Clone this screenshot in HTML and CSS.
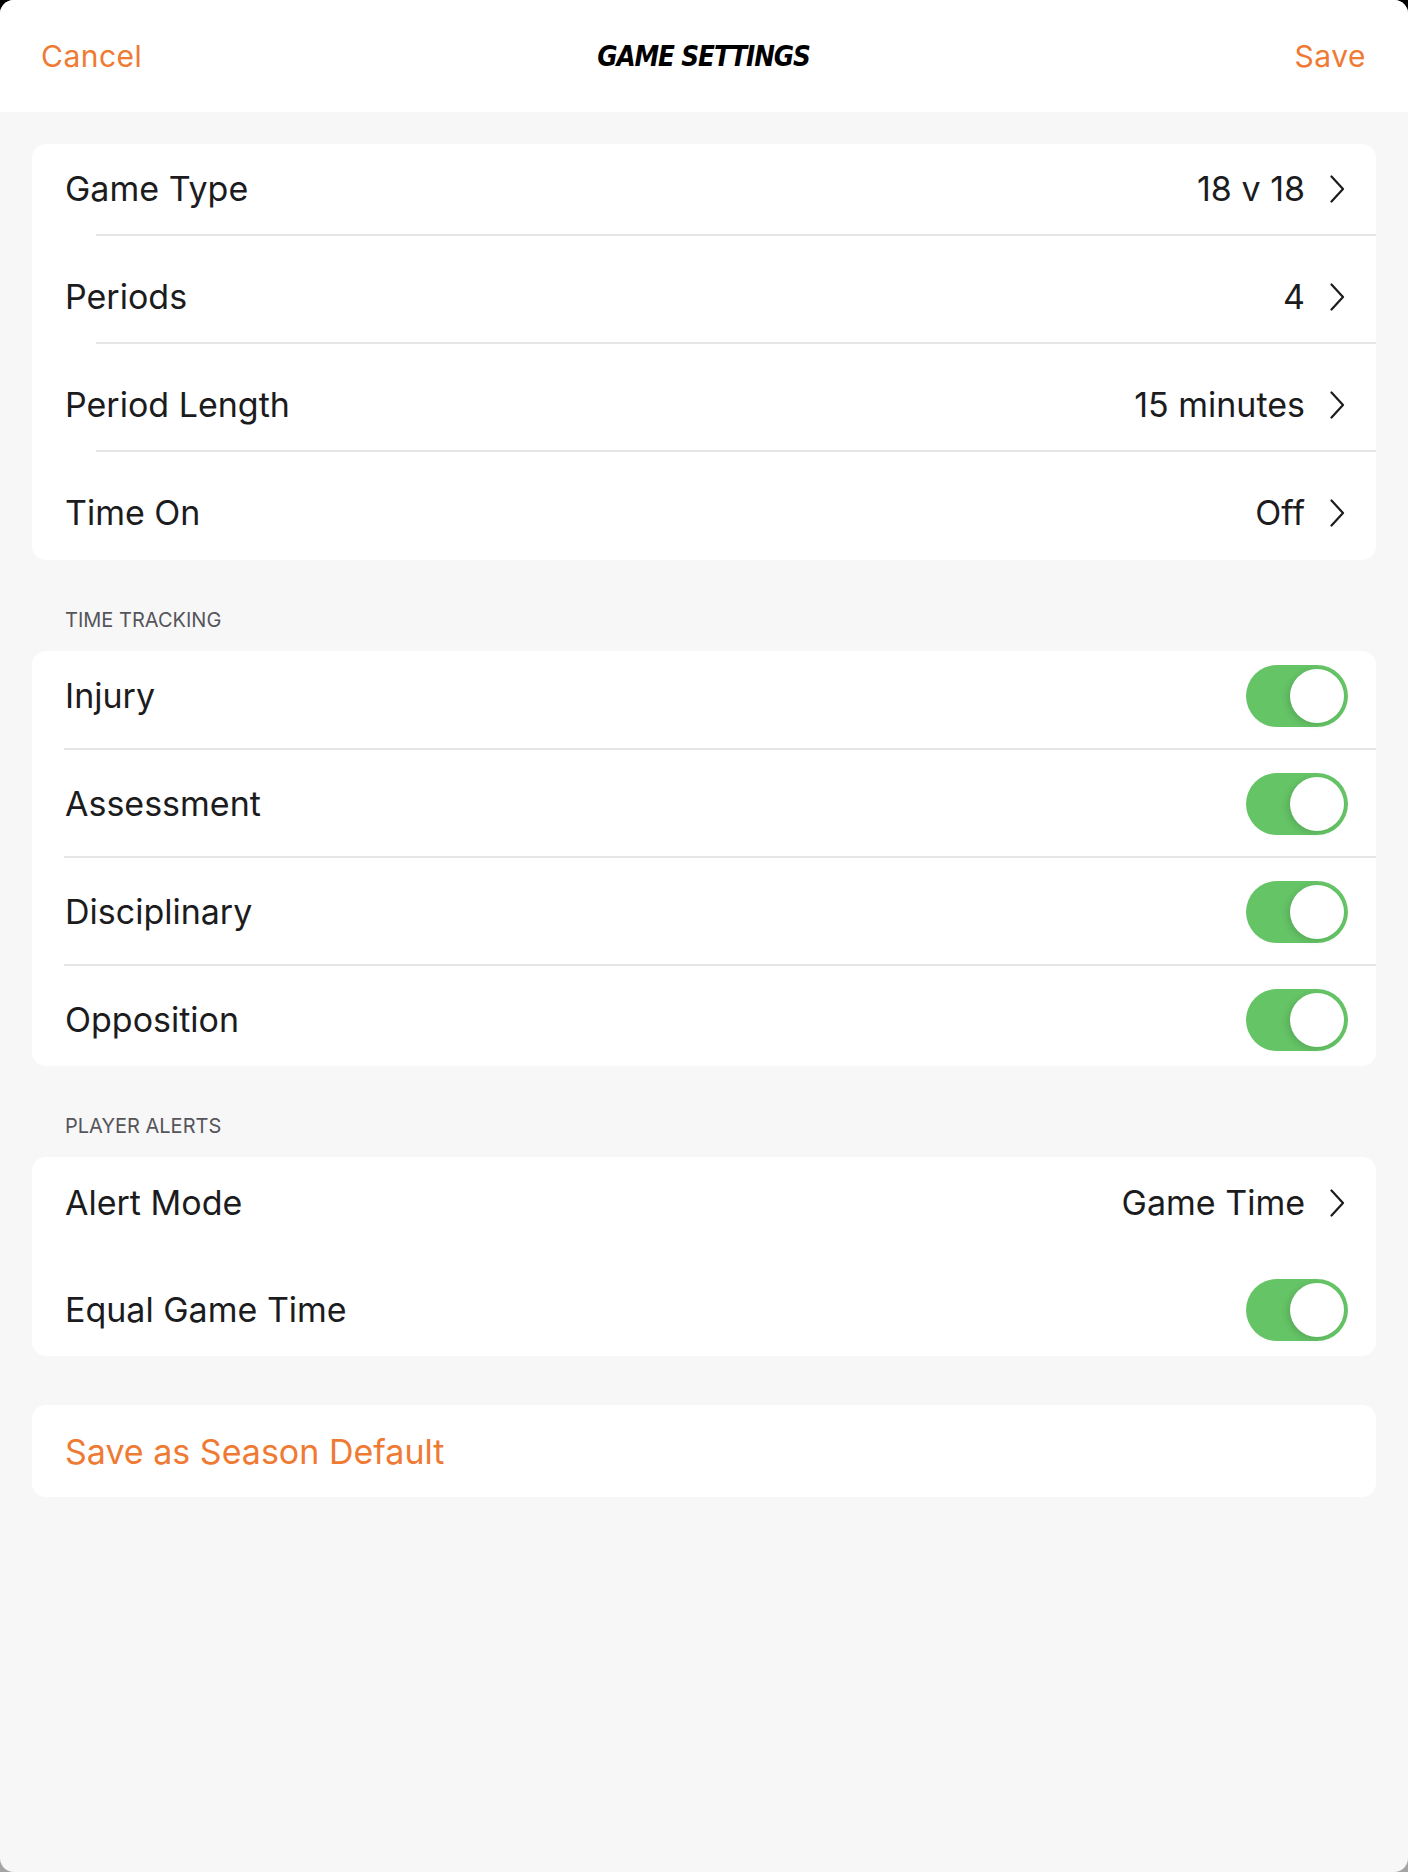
FILE: index.html
```html
<!DOCTYPE html>
<html lang="en">
<head>
    <meta charset="UTF-8">
    <meta name="viewport" content="width=device-width, initial-scale=1.0">
    <title>Game Settings</title>
    <link rel="stylesheet" href="styles.css">
</head>
<body>
    <div class="sheet">
        <header class="nav-bar">
            <a class="nav-action">Cancel</a>
            <h1 class="nav-title">GAME SETTINGS</h1>
            <a class="nav-action nav-action-right">Save</a>
        </header>

        <main class="content">
            <section class="card card-nav">
                <div class="row">
                    <span class="label">Game Type</span>
                    <span class="value">18 v 18</span>
                    <svg class="chevron" viewBox="0 0 16 28"><path d="M2.5 1.5 L14 14 L2.5 26.5"/></svg>
                </div>
                <div class="sep"></div>
                <div class="row">
                    <span class="label">Periods</span>
                    <span class="value">4</span>
                    <svg class="chevron" viewBox="0 0 16 28"><path d="M2.5 1.5 L14 14 L2.5 26.5"/></svg>
                </div>
                <div class="sep"></div>
                <div class="row">
                    <span class="label">Period Length</span>
                    <span class="value">15 minutes</span>
                    <svg class="chevron" viewBox="0 0 16 28"><path d="M2.5 1.5 L14 14 L2.5 26.5"/></svg>
                </div>
                <div class="sep"></div>
                <div class="row">
                    <span class="label">Time On</span>
                    <span class="value">Off</span>
                    <svg class="chevron" viewBox="0 0 16 28"><path d="M2.5 1.5 L14 14 L2.5 26.5"/></svg>
                </div>
            </section>

            <h2 class="section-title">TIME TRACKING</h2>
            <section class="card card-toggles">
                <div class="row">
                    <span class="label">Injury</span>
                    <span class="toggle"><span class="knob"></span></span>
                </div>
                <div class="sep"></div>
                <div class="row">
                    <span class="label">Assessment</span>
                    <span class="toggle"><span class="knob"></span></span>
                </div>
                <div class="sep"></div>
                <div class="row">
                    <span class="label">Disciplinary</span>
                    <span class="toggle"><span class="knob"></span></span>
                </div>
                <div class="sep"></div>
                <div class="row">
                    <span class="label">Opposition</span>
                    <span class="toggle"><span class="knob"></span></span>
                </div>
            </section>

            <h2 class="section-title">PLAYER ALERTS</h2>
            <section class="card card-alerts">
                <div class="row row-link">
                    <span class="label">Alert Mode</span>
                    <span class="value">Game Time</span>
                    <svg class="chevron" viewBox="0 0 16 28"><path d="M2.5 1.5 L14 14 L2.5 26.5"/></svg>
                </div>
                <div class="row row-switch">
                    <span class="label">Equal Game Time</span>
                    <span class="toggle"><span class="knob"></span></span>
                </div>
            </section>

            <section class="card card-action">
                <div class="row">
                    <span class="label action">Save as Season Default</span>
                </div>
            </section>
        </main>
    </div>
</body>
</html>
```

FILE: styles.css
```css
html {
    background: linear-gradient(#000 0, #000 50%, #a4a4a4 50%, #a4a4a4 100%);
}
body {
    margin: 0;
    font-family: Inter, "Noto Sans", sans-serif;
    color: #1c1c1e;
}
.sheet {
    height: 1872px;
    background-color: #f7f7f7;
    border-radius: 14px;
    overflow: hidden;
}
.nav-bar {
    height: 112px;
    background-color: #fff;
    display: grid;
    grid-template-columns: 1fr auto 1fr;
    align-items: center;
    padding: 0 42px 0 41px;
}
.nav-action {
    color: #ef7a33;
    font-size: 30px;
    letter-spacing: 0.5px;
}
.nav-action-right {
    justify-self: end;
}
.nav-title {
    margin: 0;
    font-family: "DejaVu Sans Condensed", "DejaVu Sans", sans-serif;
    font-style: italic;
    font-weight: 700;
    font-size: 27.5px;
    letter-spacing: -1.1px;
    color: #000;
}
.content {
    padding: 32px;
}
.card {
    background-color: #fff;
    border-radius: 14px;
}
.row {
    display: flex;
    align-items: center;
    padding-left: 33px;
}
.label {
    flex: 1;
    font-size: 34px;
    line-height: 40px;
}
.value {
    font-size: 34px;
    line-height: 40px;
    margin-right: 24px;
}
.chevron {
    width: 16px;
    height: 28px;
    fill: none;
    stroke: #1c1c1e;
    stroke-width: 2.2;
    stroke-linecap: round;
    stroke-linejoin: round;
}
.sep {
    height: 2px;
    background-color: #e5e5e5;
}

/* chevron rows */
.card-nav .row {
    padding: 41px 31px 25px 33px;
}
.card-nav .row:first-child {
    padding-top: 25px;
}
.card-nav .row:last-child {
    padding-bottom: 27px;
}
.card-nav .sep {
    margin-left: 64px;
}

/* switch rows */
.card-toggles .row {
    padding: 23px 28px 21px 33px;
}
.card-toggles .row:first-child {
    padding-top: 14px;
}
.card-toggles .row:last-child {
    padding-bottom: 15px;
}
.card-toggles .sep {
    margin-left: 32px;
}
.toggle {
    width: 102px;
    height: 62px;
    box-sizing: border-box;
    padding: 4px;
    border-radius: 31px;
    background-color: #65c466;
    display: flex;
    justify-content: flex-end;
}
.knob {
    width: 54px;
    height: 54px;
    border-radius: 50%;
    background-color: #fff;
    box-shadow: -3px 2px 6px rgba(0, 0, 0, 0.12);
}

.card-alerts .row-link {
    padding: 26px 31px 26px 33px;
}
.card-alerts .row-switch {
    padding: 30px 28px 15px 33px;
}

.section-title {
    margin: 48px 0 19px 33px;
    font-size: 20px;
    line-height: 24px;
    font-weight: 400;
    color: #55555a;
}

.card-action {
    margin-top: 49px;
}
.card-action .row {
    padding: 27px 33px 25px;
}
.action {
    color: #ef7a33;
}
```
